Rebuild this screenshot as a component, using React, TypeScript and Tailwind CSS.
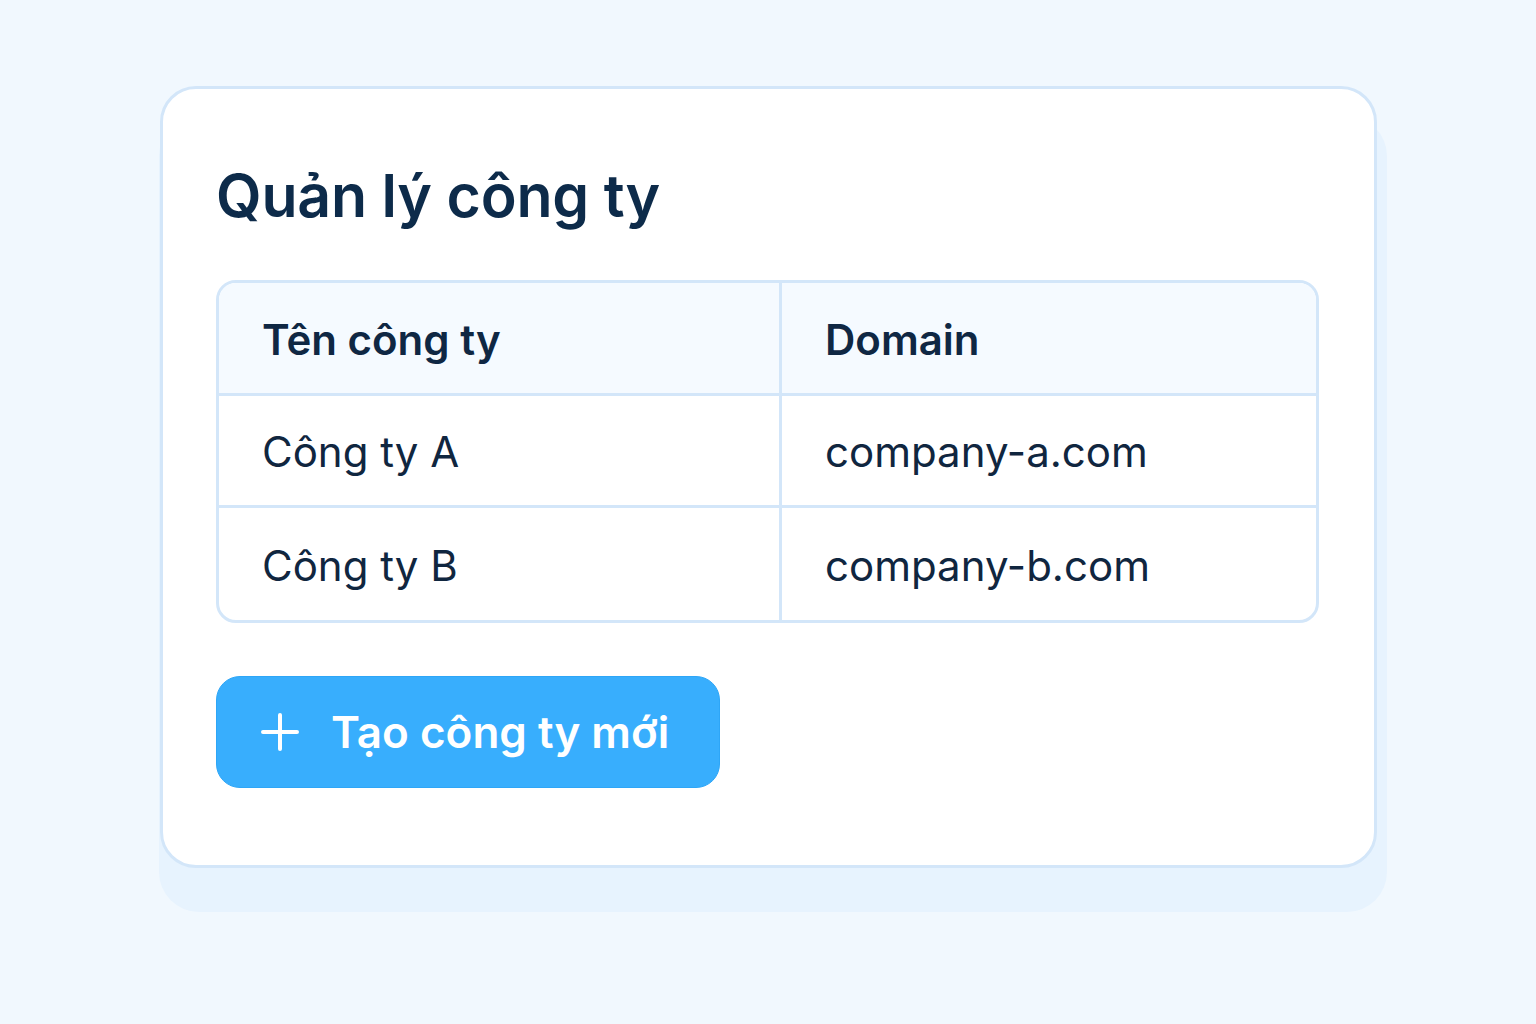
import React from "react";

const rows = [
  { name: "Công ty A", domain: "company-a.com" },
  { name: "Công ty B", domain: "company-b.com" },
];

export default function App() {
  return (
    <div
      className="w-full h-[1024px] bg-[#f1f8fe] pt-[86px] pl-[160px]"
      style={{ fontFamily: "Inter, 'Noto Sans', sans-serif" }}
    >
      <div className="relative w-[1217px]">
        <div className="absolute left-[-1px] right-[-10px] top-[30px] bottom-[-44px] rounded-[40px] bg-[#e7f3fe]" />
        <div className="relative h-[782px] rounded-[36px] border-[3px] border-[#d3e6f9] bg-white pl-[53px] pr-[55px] pt-[71px]">
          <h1 className="text-[59px] leading-[1.21] font-semibold text-[#0d2b4a] tracking-[-0.2px]">
            Quản lý công ty
          </h1>
          <div className="mt-[49px] rounded-[20px] border-[3px] border-[#d3e6f9] overflow-hidden">
            <div className="grid grid-cols-[563px_1fr] bg-[#f5faff] border-b-[3px] border-[#d3e6f9] h-[113px]">
              <div className="flex items-center pl-[43px] pt-[2px] border-r-[3px] border-[#d3e6f9] text-[42px] font-semibold text-[#0f2743]">
                Tên công ty
              </div>
              <div className="flex items-center pl-[43px] pt-[2px] text-[42px] font-semibold text-[#0f2743]">
                Domain
              </div>
            </div>
            {rows.map((r, i) => (
              <div
                key={r.name}
                className={
                  i === 0
                    ? "grid grid-cols-[563px_1fr] border-b-[3px] border-[#d3e6f9] h-[112px]"
                    : "grid grid-cols-[563px_1fr] h-[112px]"
                }
              >
                <div className="flex items-center pl-[43px] pt-[2px] border-r-[3px] border-[#d3e6f9] text-[42px] font-normal text-[#10263f]">
                  {r.name}
                </div>
                <div className="flex items-center pl-[43px] pt-[2px] text-[42px] font-normal text-[#10263f]">
                  {r.domain}
                </div>
              </div>
            ))}
          </div>
          <button className="mt-[53px] flex items-center h-[112px] w-[504px] rounded-[24px] bg-[#38aefd] border border-[#2ea6f7] pl-[43px]">
            <svg width="40" height="40" viewBox="0 0 40 40" fill="none">
              <path d="M20 3v34M3 20h34" stroke="white" strokeWidth="4" strokeLinecap="round" />
            </svg>
            <span className="ml-[31px] text-[44px] font-semibold text-white leading-none">
              Tạo công ty mới
            </span>
          </button>
        </div>
      </div>
    </div>
  );
}
